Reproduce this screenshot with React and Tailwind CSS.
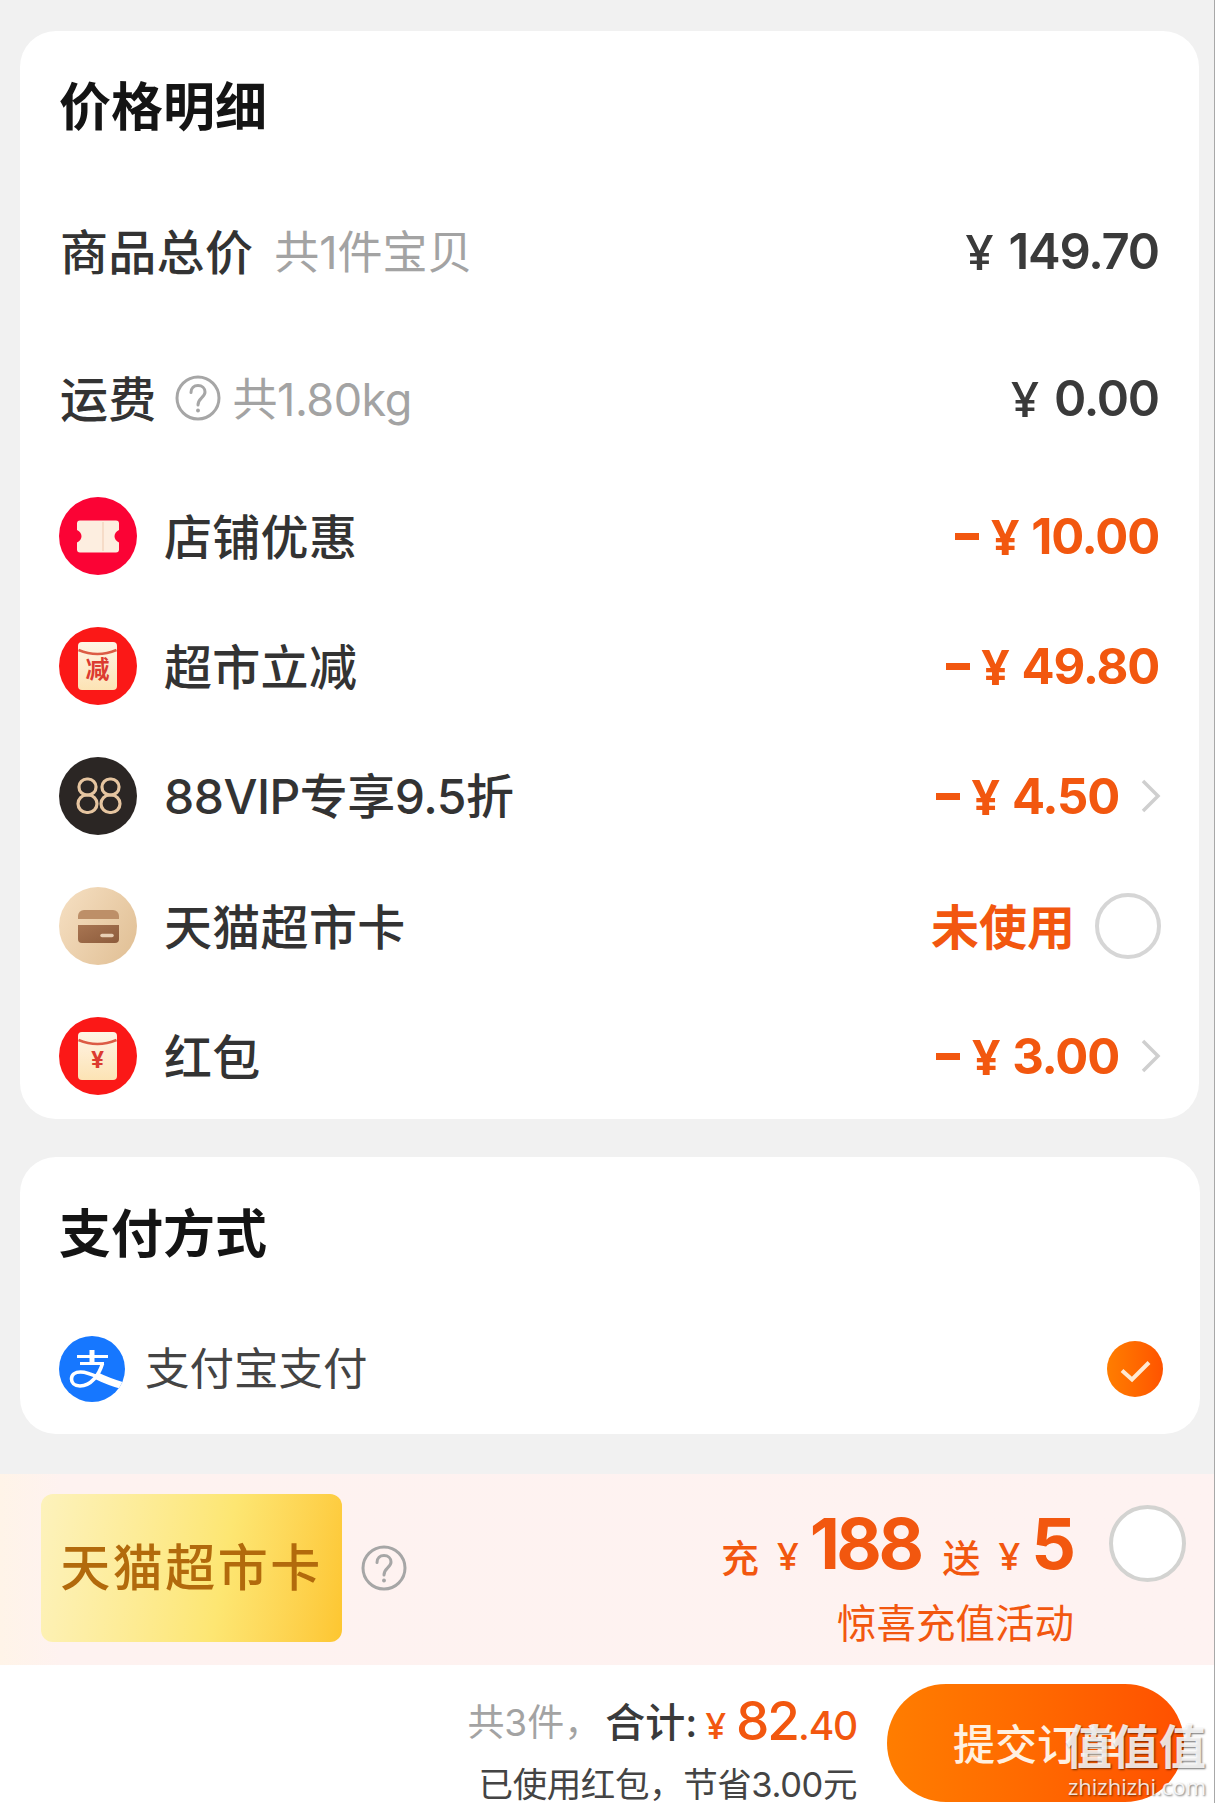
import React, { useState } from "react";

const TicketIcon = () => (
  <svg viewBox="0 0 78 78" className="size-[78px] shrink-0">
    <circle cx="39" cy="39" r="39" fill="#fb0335" />
    <path
      d="M21 23.500h36a3 3 0 0 1 3 3v6.500c-6 2.500-6 10 0 12.500v7a3 3 0 0 1-3 3H21a3 3 0 0 1-3-3v-7c6-2.500 6-10 0-12.500v-6.500a3 3 0 0 1 3-3z"
      fill="#fdeee0"
    />
    <path d="M44 25v29" stroke="#f6dcc8" strokeWidth="2" />
  </svg>
);

const EnvelopeIcon = ({ label, size }) => (
  <svg viewBox="0 0 78 78" className="size-[78px] shrink-0">
    <defs>
      <linearGradient id="envelope" x1="0" y1="0" x2="0" y2="1">
        <stop offset="0" stopColor="#fff4e6" />
        <stop offset="1" stopColor="#fce3b4" />
      </linearGradient>
    </defs>
    <circle cx="39" cy="39" r="39" fill="#fb1817" />
    <rect x="19" y="15" width="39" height="48" rx="4" fill="url(#envelope)" />
    <path d="M19.500 23Q38.500 31 57.500 23" fill="none" stroke="#dc5b45" strokeWidth="2.500" />
    <text
      x="38.500"
      y="51"
      textAnchor="middle"
      fontSize={size}
      fontWeight="700"
      fill="#dc3b30"
    >
      {label}
    </text>
  </svg>
);

const VipIcon = () => (
  <svg viewBox="0 0 78 78" className="size-[78px] shrink-0">
    <circle cx="39" cy="39" r="39" fill="#2b2624" />
    <g fill="none" stroke="#e6c5a0" strokeWidth="3.200">
      <rect x="20" y="22" width="17" height="16" rx="7.800" />
      <rect x="19" y="38" width="19" height="17.500" rx="8.700" />
      <rect x="43" y="22" width="17" height="16" rx="7.800" />
      <rect x="42" y="38" width="19" height="17.500" rx="8.700" />
    </g>
  </svg>
);

const CardIcon = () => (
  <svg viewBox="0 0 78 78" className="size-[78px] shrink-0">
    <defs>
      <linearGradient id="cardBg" x1="0" y1="0" x2="1" y2="0.6">
        <stop offset="0" stopColor="#f6e0c3" />
        <stop offset="1" stopColor="#e3c39a" />
      </linearGradient>
      <linearGradient id="cardFront" x1="0" y1="0" x2="1" y2="1">
        <stop offset="0" stopColor="#a87552" />
        <stop offset="1" stopColor="#8d5c3c" />
      </linearGradient>
    </defs>
    <circle cx="39" cy="39" r="39" fill="url(#cardBg)" />
    <path d="M19 32v-3a6 6 0 0 1 6-6h29a6 6 0 0 1 6 6v3z" fill="#bd8f68" />
    <path d="M19 38h41v14a4 4 0 0 1-4 4H23a4 4 0 0 1-4-4z" fill="url(#cardFront)" />
    <path d="M43 48.500h10" stroke="#e8cfb4" strokeWidth="3.500" strokeLinecap="round" />
  </svg>
);

const AlipayIcon = () => (
  <svg viewBox="0 0 66 66" className="size-[66px] shrink-0">
    <defs>
      <clipPath id="alipayClip">
        <circle cx="33" cy="33" r="33" />
      </clipPath>
    </defs>
    <circle cx="33" cy="33" r="33" fill="#1677ff" />
    <g fill="none" stroke="#fff" clipPath="url(#alipayClip)">
      <path d="M33 14v13" strokeWidth="5" />
      <path d="M18 20.500h31M21 27.500h24" strokeWidth="3" />
      <path
        d="M43.500 27.500C40 39 32 50 21 50c-6 0-8.500-3.500-8.500-7 0-4 3.500-7 9-7 9 0 16 5 24 8.500"
        strokeWidth="3.600"
      />
      <path d="M37 39.500c8 4 17 7.500 29 11" strokeWidth="7" />
    </g>
  </svg>
);

const QuestionIcon = () => (
  <svg viewBox="0 0 46 46" className="size-[46px] shrink-0" fill="none" stroke="#a6a6a6">
    <circle cx="23" cy="23" r="21" strokeWidth="3" />
    <path
      d="M16 17.500c0-4.500 3-7 7-7s7 2.700 7 6.500c0 5.500-7 6-7 13"
      strokeWidth="3"
      strokeLinecap="round"
    />
    <circle cx="23" cy="35.500" r="1.200" fill="#a6a6a6" strokeWidth="1.500" />
  </svg>
);

const Chevron = () => (
  <svg viewBox="0 0 20 36" className="ml-5 h-9 w-5 shrink-0">
    <path d="M2 3l15 15L2 33" fill="none" stroke="#cfcfcf" strokeWidth="3.500" />
  </svg>
);

const Amount = ({ value, minus }) => (
  <div
    className={
      minus
        ? "flex items-center text-[49px] font-bold leading-none text-[#f2570f]"
        : "flex items-center text-[49px] font-semibold leading-none text-[#3a3a3a]"
    }
  >
    {minus && <span className="mr-3 h-[7px] w-6 bg-[#f2570f]" />}
    <span
      className={minus ? "mr-3 font-['Open_Sans']" : "mr-[15px] font-['Open_Sans'] font-semibold"}
    >
      ¥
    </span>
    <span className="mr-[2px] tracking-[-1.200px]">{value}</span>
  </div>
);

const discounts = [
  { name: "店铺优惠", icon: <TicketIcon />, value: "10.00" },
  { name: "超市立减", icon: <EnvelopeIcon label="减" size="24" />, value: "49.80" },
  { name: "88VIP专享9.5折", icon: <VipIcon />, value: "4.50", arrow: true, tight: true },
  { name: "天猫超市卡", icon: <CardIcon />, select: true },
  { name: "红包", icon: <EnvelopeIcon label="¥" size="23" />, value: "3.00", arrow: true },
];

const App = () => {
  const [useCard, setUseCard] = useState(false);
  const [recharge, setRecharge] = useState(false);

  return (
    <div className="relative flex h-[1803px] w-[1215px] flex-col overflow-hidden border-r border-[#a8a8a8] bg-[#f1f1f1] pt-[31px] font-['Inter','Noto_Sans_CJK_SC',sans-serif]">
      {/* Price details */}
      <section className="ml-5 mr-[15px] h-[1088px] shrink-0 rounded-[36px] bg-white pl-[39px] pr-[38px]">
        <div className="flex h-[147px] items-center pt-[6px]">
          <h2 className="text-[52px] font-bold leading-none text-[#141414]">价格明细</h2>
        </div>

        <div className="flex h-[147px] items-center justify-between">
          <div className="flex items-center pl-px pt-[2px] leading-none">
            <span className="text-[48px] font-medium tracking-[0.300px] text-[#333]">
              商品总价
            </span>
            <span className="ml-[21px] text-[45px] text-[#a3a3a3]">共1件宝贝</span>
          </div>
          <Amount value="149.70" />
        </div>

        <div className="flex h-[146px] items-center justify-between">
          <div className="flex items-center pl-px leading-none">
            <span className="pt-[3px] text-[48px] font-medium tracking-[0.300px] text-[#333]">
              运费
            </span>
            <span className="ml-[18px]">
              <QuestionIcon />
            </span>
            <span className="ml-3 pt-[2px] text-[45px] tracking-[-0.500px] text-[#a3a3a3]">
              共1.80kg
            </span>
          </div>
          <Amount value="0.00" />
        </div>

        {discounts.map((item) => (
          <div key={item.name} className="flex h-[130px] items-center">
            {item.icon}
            <span
              className={
                item.tight
                  ? "ml-[27px] pt-[2px] text-[48px] font-medium leading-none tracking-[-0.500px] text-[#333]"
                  : "ml-[27px] pt-1 text-[48px] font-medium leading-none tracking-[0.300px] text-[#333]"
              }
            >
              {item.name}
            </span>
            <div className="ml-auto flex items-center">
              {item.value && <Amount value={item.value} minus />}
              {item.arrow && <Chevron />}
              {item.select && (
                <>
                  <span className="pt-1 text-[48px] font-bold leading-none text-[#f2570f]">
                    未使用
                  </span>
                  <button
                    className="ml-5 size-[66px] rounded-full border-4 border-[#d6d6d6] bg-white"
                    onClick={() => setUseCard(!useCard)}
                  />
                </>
              )}
            </div>
          </div>
        ))}
      </section>

      {/* Payment method */}
      <section className="ml-5 mr-[14px] mt-[38px] h-[277px] shrink-0 rounded-[36px] bg-white pl-[39px] pr-[37px]">
        <div className="flex h-[152px] items-center pt-1">
          <h2 className="text-[52px] font-bold leading-none text-[#141414]">支付方式</h2>
        </div>
        <div className="flex h-[120px] items-center">
          <AlipayIcon />
          <span className="ml-5 text-[44.500px] leading-none text-[#444]">支付宝支付</span>
          <span className="ml-auto flex size-14 items-center justify-center rounded-full bg-linear-to-r from-[#ff7d00] to-[#ff5300]">
            <svg viewBox="0 0 56 56" className="size-14">
              <path d="M15 29.500l10 9 17-17" fill="none" stroke="#ffe9d2" strokeWidth="4" />
            </svg>
          </span>
        </div>
      </section>

      {/* Recharge banner */}
      <section className="mt-10 flex h-[191px] shrink-0 bg-linear-to-r from-[#fff4e8] via-[#fef2f0] via-5% to-[#fef2f1] pl-[41px] pr-[28px]">
        <div className="mt-5 flex h-[148px] w-[301px] shrink-0 items-center justify-center rounded-[12px] bg-linear-100 from-[#fdf2bc] via-[#fde672] via-60% to-[#fdc62f]">
          <span className="text-[50px] font-medium leading-none tracking-[2.500px] text-[#b26a0c]">
            天猫超市卡
          </span>
        </div>
        <span className="ml-[19px] mt-[71px]">
          <QuestionIcon />
        </span>
        <div className="ml-auto flex flex-col items-end text-[#f2570f]">
          <div className="mt-[32px] flex h-[76px] items-baseline leading-[76px]">
            <span className="translate-y-[3px] text-[38px] font-medium">充</span>
            <span className="ml-[18px] translate-y-px font-['Open_Sans'] text-[38px] font-semibold">
              ¥
            </span>
            <span className="ml-[11px] text-[70px] font-bold tracking-[-3.500px]">188</span>
            <span className="ml-[22px] translate-y-[3px] text-[38px] font-medium">送</span>
            <span className="ml-[18px] translate-y-px font-['Open_Sans'] text-[38px] font-semibold">
              ¥
            </span>
            <span className="ml-[11px] mr-px text-[70px] font-bold tracking-[-3px]">5</span>
          </div>
          <span className="mt-[23px] text-[39.500px] leading-none">惊喜充值活动</span>
        </div>
        <button
          className="ml-[35px] mt-[31px] size-[77px] rounded-full border-4 border-[#d3d3d1] bg-white"
          onClick={() => setRecharge(!recharge)}
        />
      </section>

      {/* Submit bar */}
      <footer className="flex h-[138px] shrink-0 justify-end bg-white pr-[30px]">
        <div className="flex flex-col items-end">
          <div className="mt-[22px] flex h-[60px] items-baseline leading-[60px]">
            <span className="text-[37px] text-[#a3a3a3]">共3件，</span>
            <span className="ml-1 translate-y-px text-[40px] font-medium text-[#3a3a3a]">
              合计:
            </span>
            <span className="ml-2 translate-y-[3px] font-['Open_Sans'] text-[36px] font-semibold text-[#f2570f]">
              ¥
            </span>
            <span className="ml-[10px] translate-y-[4px] text-[53px] font-medium tracking-[-2px] text-[#f2570f]">
              82
            </span>
            <span className="mr-[2px] translate-y-[4px] text-[39px] font-medium tracking-[-1.200px] text-[#f2570f]">
              .40
            </span>
          </div>
          <span className="mr-[2px] mt-[21px] text-[34.500px] leading-none tracking-[-0.400px] text-[#444]">
            已使用红包，节省3.00元
          </span>
        </div>
        <button className="ml-[28px] mt-[19px] flex h-[118px] w-[297px] shrink-0 items-center rounded-full bg-linear-to-r from-[#ff7d00] to-[#ff5000] pl-[66px] pt-1 text-[42px] font-medium leading-none text-[#fff0e0]">
          提交订单
        </button>
      </footer>

      {/* Watermark */}
      <div className="absolute bottom-[3px] right-[8px] flex flex-col items-end text-white/85 [text-shadow:1px_1px_2px_rgb(0_0_0/0.55)]">
        <span className="text-[47px] font-bold leading-[50px]">值值值</span>
        <span className="font-['Open_Sans'] text-[22px] font-medium leading-[28px]">
          zhizhizhi.com
        </span>
      </div>
    </div>
  );
};

export default App;
